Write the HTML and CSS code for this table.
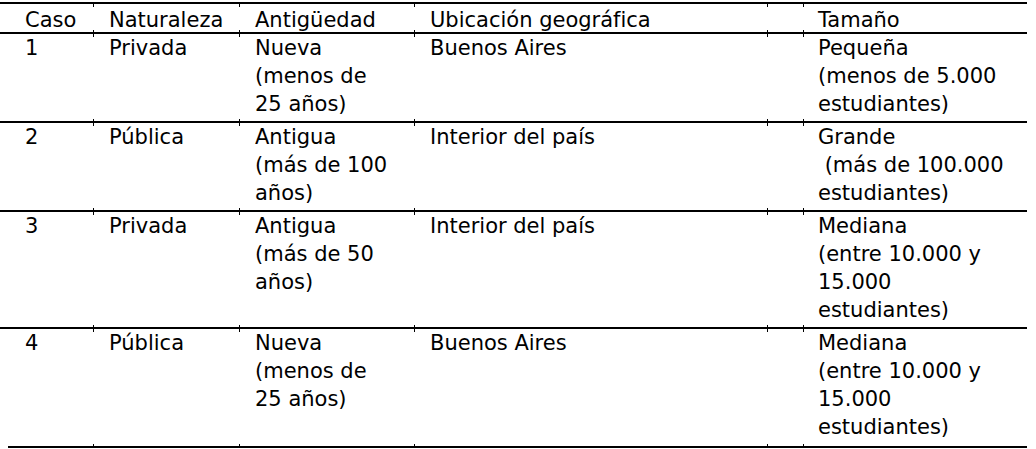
FILE: index.html
```html
<!DOCTYPE html>
<html lang="es">
<head>
<meta charset="utf-8">
<link rel="stylesheet" href="styles.css">
</head>
<body>
<div class="wrap">
<table class="casos">
  <colgroup>
    <col class="c-caso">
    <col class="c-nat">
    <col class="c-ant">
    <col class="c-ubi">
    <col class="c-gap">
    <col class="c-tam">
  </colgroup>
  <thead>
    <tr>
      <th class="p-caso">Caso</th>
      <th>Naturaleza</th>
      <th>Antigüedad</th>
      <th>Ubicación geográfica</th>
      <th class="gap"></th>
      <th class="p-tam">Tamaño</th>
    </tr>
  </thead>
  <tbody>
    <tr>
      <td class="p-caso">1</td>
      <td>Privada</td>
      <td>Nueva<br>(menos de<br>25 años)</td>
      <td>Buenos Aires</td>
      <td class="gap"></td>
      <td class="p-tam">Pequeña<br>(menos de 5.000<br>estudiantes)</td>
    </tr>
    <tr>
      <td class="p-caso">2</td>
      <td>Pública</td>
      <td>Antigua<br>(más de 100<br>años)</td>
      <td>Interior del país</td>
      <td class="gap"></td>
      <td class="p-tam">Grande<br>&nbsp;(más de 100.000<br>estudiantes)</td>
    </tr>
    <tr>
      <td class="p-caso">3</td>
      <td>Privada</td>
      <td>Antigua<br>(más de 50<br>años)</td>
      <td>Interior del país</td>
      <td class="gap"></td>
      <td class="p-tam">Mediana<br>(entre 10.000 y<br>15.000<br>estudiantes)</td>
    </tr>
    <tr class="last">
      <td class="p-caso">4</td>
      <td>Pública</td>
      <td>Nueva<br>(menos de<br>25 años)</td>
      <td>Buenos Aires</td>
      <td class="gap"></td>
      <td class="p-tam">Mediana<br>(entre 10.000 y<br>15.000<br>estudiantes)</td>
    </tr>
  </tbody>
</table>
<div class="bottom-rule"></div>
</div>
</body>
</html>
```
FILE: styles.css
```css
html, body {
  margin: 0;
  padding: 0;
  background: #fff;
}

.wrap {
  padding-top: 2px;
  width: 1027px;
}

.casos {
  border-collapse: collapse;
  table-layout: fixed;
  width: 1027px;
  font-family: "DejaVu Sans", Verdana, sans-serif;
  font-size: 21px;
  line-height: 28px;
  color: #000;
}

.c-caso { width: 93px; }
.c-nat { width: 146px; }
.c-ant { width: 175px; }
.c-ubi { width: 353px; }
.c-gap { width: 36px; }
.c-tam { width: 224px; }

.casos th,
.casos td {
  font-weight: normal;
  text-align: left;
  vertical-align: top;
  white-space: nowrap;
  padding: 0 0 3px 16px;
  border-top: 2px solid #000;
}

.casos th {
  padding-top: 4px;
  padding-bottom: 0;
  line-height: 24px;
}

.casos th + th,
.casos td + td {
  background:
    linear-gradient(#000, #000) left top / 1px 3px no-repeat,
    linear-gradient(#000, #000) left bottom / 1px 2px no-repeat;
}

.casos .p-caso { padding-left: 25px; }
.casos .p-tam { padding-left: 15px; }
.casos .gap { padding-left: 0; }

.casos tr.last td { padding-bottom: 5px; }

.bottom-rule {
  margin-left: 8px;
  border-top: 2px solid #000;
}
```
